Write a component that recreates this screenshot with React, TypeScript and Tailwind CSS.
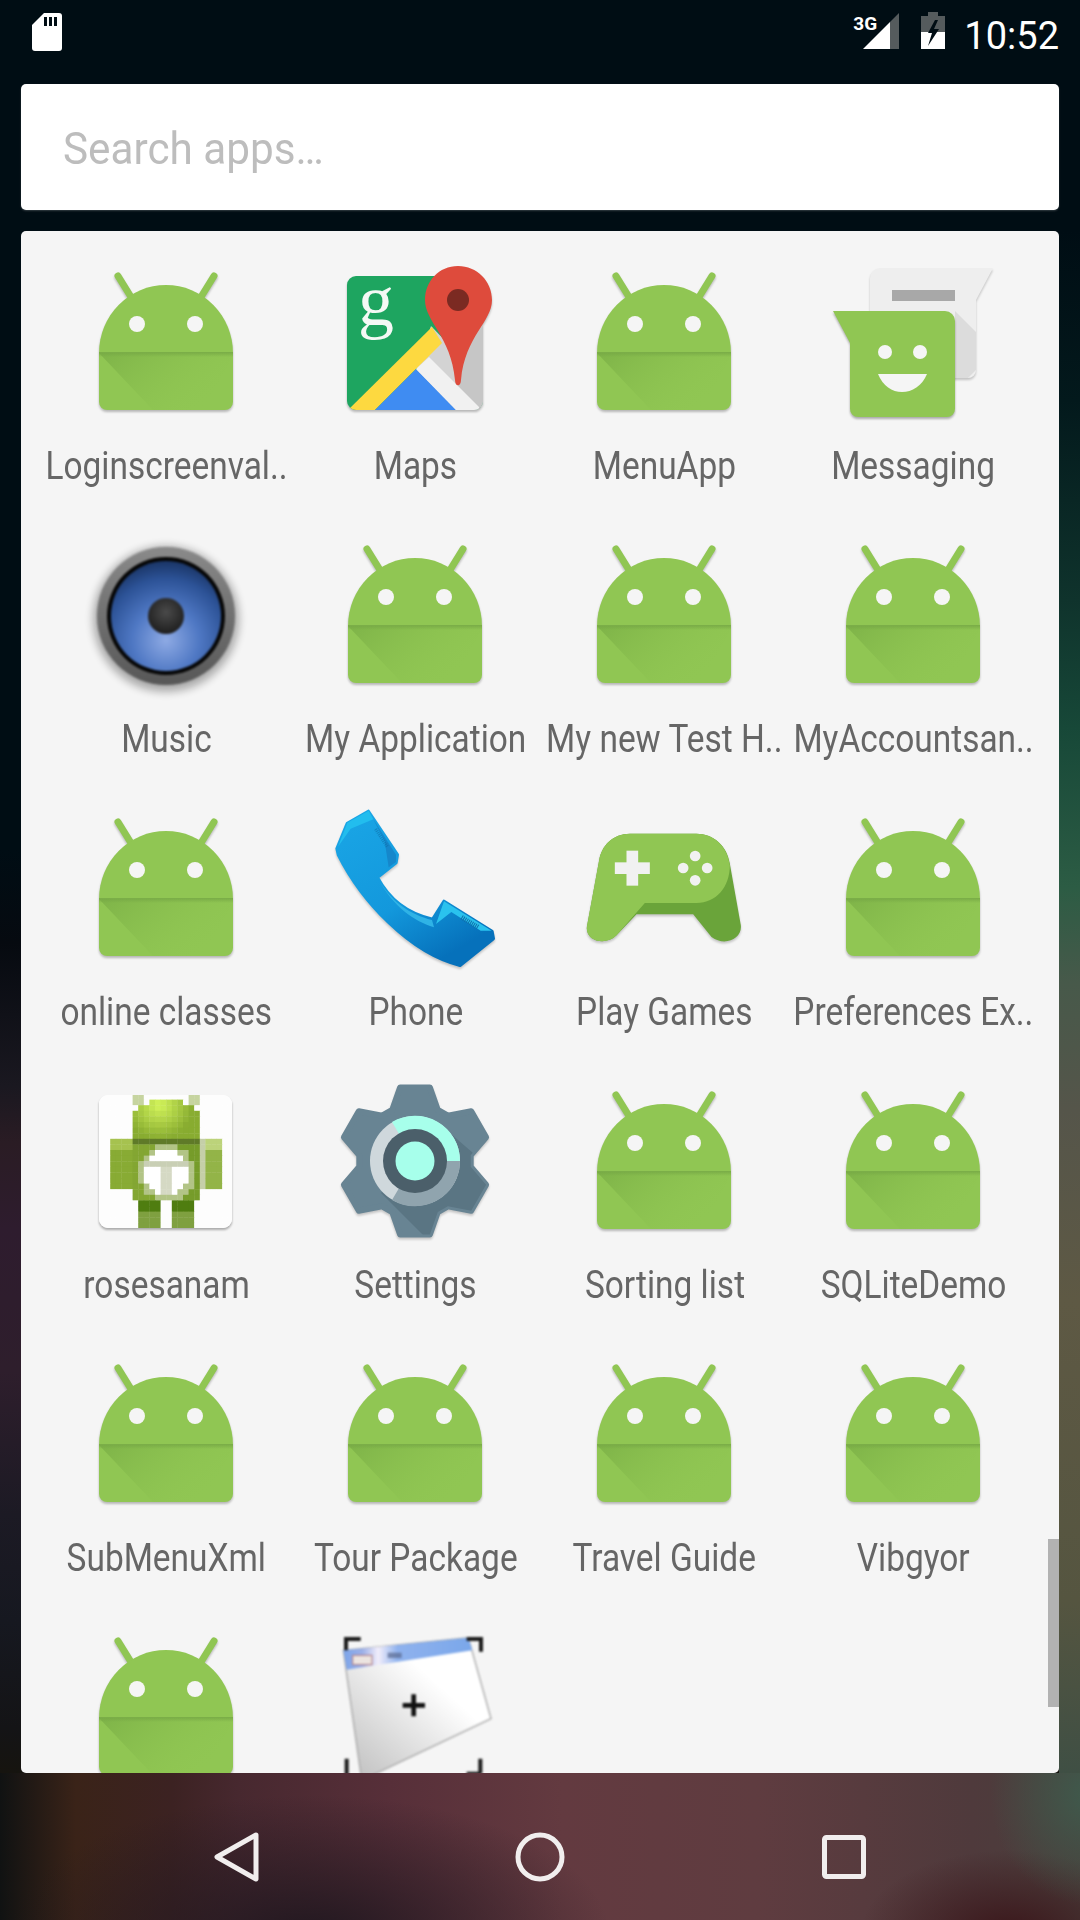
import React from "react";

const Android = () => (
  <svg width="144" height="144" viewBox="0 0 144 144" className="overflow-visible drop-shadow-[0_2px_1px_rgba(0,0,0,0.25)]">
    <defs>
      <linearGradient id="fold" x1="0" y1="0" x2="1" y2="0.5">
        <stop offset="0" stopColor="#6fa33f" stopOpacity="0.55" />
        <stop offset="1" stopColor="#8fc650" stopOpacity="0" />
      </linearGradient>
      <linearGradient id="crease" x1="0" y1="0" x2="0" y2="1">
        <stop offset="0" stopColor="#76a845" stopOpacity="0.9" />
        <stop offset="1" stopColor="#76a845" stopOpacity="0" />
      </linearGradient>
    </defs>
    <path d="M24 6 L37 27 M120 6 L107 27" stroke="#90c653" strokeWidth="7" strokeLinecap="round" />
    <path d="M5 83 A67 68 0 0 1 139 83 L139 132 A8 8 0 0 1 131 140 L13 140 A8 8 0 0 1 5 132 Z" fill="#90c653" />
    <path d="M5 83 L139 83 L139 86 L110 140 L59 140 Z" fill="url(#fold)" />
    <rect x="5" y="82" width="134" height="5" fill="url(#crease)" />
    <circle cx="43" cy="54" r="8" fill="#f5f5f5" />
    <circle cx="101" cy="54" r="8" fill="#f5f5f5" />
  </svg>
);

const Maps = () => (
  <svg width="144" height="144" viewBox="0 0 144 144" className="overflow-visible drop-shadow-[0_2px_1px_rgba(0,0,0,0.25)]">
    <defs>
      <clipPath id="mapclip"><rect x="4" y="6" width="136" height="134" rx="9" /></clipPath>
    </defs>
    <g clipPath="url(#mapclip)">
      <rect x="4" y="6" width="136" height="134" fill="#1ea560" />
      <polygon points="88,56 140,110 140,140 60,140" fill="#d3d3d3" />
      <polygon points="115,30 140,30 140,140 115,140" fill="#c6c6c6" />
      <polygon points="4,141 89,57 99,73 32,140" fill="#fdd940" />
      <polygon points="32,140 73,99 113,140" fill="#3f8cf2" />
      <polygon points="73,99 86,87 136,137 136,140 113,140" fill="#f1f1f1" />
    </g>
    <text x="33" y="55" textAnchor="middle" fontFamily="'Liberation Serif', serif" fontSize="72" fill="#f4f9f5">g</text>
    <path d="M115 -4 C96 -4 82 11 82 30 C82 52 108 66 112 110 C112 117 118 117 118 110 C122 66 149 52 149 30 C149 11 134 -4 115 -4 Z" fill="#de4b3c" />
    <circle cx="115" cy="30" r="11" fill="#7b2a22" />
  </svg>
);

const Messaging = () => (
  <svg width="144" height="144" viewBox="1 0 144 144" className="overflow-visible">
    <path d="M40 -2 L153 -2 L136 30 L136 100 A8 8 0 0 1 128 108 L38 108 A8 8 0 0 1 30 100 L30 8 A10 10 0 0 1 40 -2 Z" fill="#eeeeee" className="drop-shadow-[0_2px_1px_rgba(0,0,0,0.2)]" />
    <polygon points="115,41 136,62 136,100 128,108 115,108" fill="#dcdcdc" />
    <rect x="52" y="20" width="63" height="11" fill="#a8a8a8" />
    <path d="M-7 41 L105 41 A10 10 0 0 1 115 51 L115 139 A8 8 0 0 1 107 147 L18 147 A8 8 0 0 1 10 139 L10 73 Z" fill="#90c653" className="drop-shadow-[0_2px_1px_rgba(0,0,0,0.3)]" />
    <circle cx="45" cy="82" r="7" fill="#f5f5f5" />
    <circle cx="80" cy="82" r="7" fill="#f5f5f5" />
    <path d="M38 104 L87 104 C82 116 72 122 62 122 C52 122 43 116 38 104 Z" fill="#f5f5f5" />
  </svg>
);

const Music = () => (
  <svg width="144" height="144" viewBox="0 0 144 144" className="overflow-visible">
    <defs>
      <radialGradient id="cone" cx="0.5" cy="0.72" r="0.72">
        <stop offset="0" stopColor="#8eaae4" />
        <stop offset="0.42" stopColor="#4f78c4" />
        <stop offset="0.78" stopColor="#2c5296" />
        <stop offset="1" stopColor="#1a3566" />
      </radialGradient>
      <radialGradient id="capm" cx="0.5" cy="0.4" r="0.6">
        <stop offset="0" stopColor="#4a4a4a" />
        <stop offset="1" stopColor="#1e1e1e" />
      </radialGradient>
      <linearGradient id="rim" x1="0" y1="0" x2="0" y2="1">
        <stop offset="0" stopColor="#8a8a8a" />
        <stop offset="1" stopColor="#575757" />
      </linearGradient>
    </defs>
    <circle cx="72" cy="76" r="73" fill="#000" opacity="0.3" className="blur-[4px]" />
    <g className="blur-[1px]">
      <circle cx="72" cy="73" r="69" fill="url(#rim)" />
      <circle cx="72" cy="73" r="59" fill="#060606" />
      <circle cx="72" cy="73" r="55" fill="url(#cone)" />
      <circle cx="72" cy="73" r="18" fill="url(#capm)" />
    </g>
  </svg>
);

const Phone = () => (
  <svg width="160" height="160" viewBox="75 50 480 480" className="overflow-visible drop-shadow-[0_2px_1px_rgba(0,0,0,0.2)]">
    <defs>
      <linearGradient id="ph" x1="0" y1="0" x2="0.6" y2="1">
        <stop offset="0" stopColor="#1aa6e6" />
        <stop offset="0.62" stopColor="#1398dc" />
        <stop offset="1" stopColor="#0671bb" />
      </linearGradient>
    </defs>
    <path d="M175 60 L262 190 L258 214 L202 258 C240 330 295 368 368 384 L402 330 L546 420 L550 442 L450 522 C300 485 155 330 85 190 L81 172 L112 96 Z" fill="url(#ph)" stroke="url(#ph)" strokeWidth="10" strokeLinejoin="round" />
    <path d="M176 58 L112 94 L84 166 L122 112 L190 84 Z" fill="#22bdee" />
    <path d="M190 84 L258 190 L258 212 L236 228 L224 150 Z" fill="#1587cb" />
    <path d="M402 330 L545 418 L512 418 L424 362 L378 398 Z" fill="#2ac2ee" />
    <path d="M208 268 C248 335 300 368 366 386 L372 408 C310 388 250 345 208 268 Z" fill="#2fb3e6" />
    <path d="M455 378 L505 408" stroke="#0f6fa8" strokeWidth="14" strokeDasharray="3 3" fill="none" />
    <path d="M197 113 L232 166" stroke="#0f6fa8" strokeWidth="10" strokeDasharray="3 3" fill="none" opacity="0.6" />
  </svg>
);

const Games = () => (
  <svg width="156" height="110" viewBox="830 128 465 330" className="overflow-visible drop-shadow-[0_2px_1px_rgba(0,0,0,0.2)]">
    <path d="M960 130 L1160 130 C1210 130 1252 165 1260 220 L1293 405 C1298 445 1245 470 1205 440 L1150 372 L980 372 L920 435 C885 470 822 450 832 405 L868 210 C875 165 910 130 960 130 Z" fill="#6aa43a" />
    <path d="M960 130 L1160 130 C1210 130 1252 165 1260 225 C1260 290 1220 338 1160 338 L1005 338 L920 435 C885 470 822 450 832 405 L868 210 C875 165 910 130 960 130 Z" fill="#90c653" />
    <rect x="915" y="216" width="105" height="35" fill="#f1f1f1" />
    <rect x="950" y="181" width="35" height="105" fill="#f1f1f1" />
    <circle cx="1156" cy="197" r="16" fill="#f1f1f1" />
    <circle cx="1120" cy="233" r="16" fill="#f1f1f1" />
    <circle cx="1192" cy="233" r="16" fill="#f1f1f1" />
    <circle cx="1156" cy="270" r="16" fill="#f1f1f1" />
  </svg>
);

const rosePixel = (x: number, y: number): string => {
  const mix = (t: number) => {
    const k = Math.max(0, Math.min(1, t));
    const a = [212, 245, 92];
    const b = [136, 172, 48];
    return `rgb(${a.map((v, i) => Math.round(v + (b[i] - v) * k)).join(",")})`;
  };
  const inBody = x >= 39 && x <= 104;
  if (inBody && y >= 12 && y < 48) {
    const w = Math.min(33, 16 + (y - 12) * 1.4);
    if (Math.abs(x - 72) <= w) return mix(Math.hypot(x - 65, y - 16) / 34);
  }
  if (inBody && y >= 48 && y < 54) return "#5f7a28";
  if (inBody && y >= 54 && y < 113) {
    const d = Math.hypot(x - 73, y - 84);
    if (d < 23) {
      if (y >= 72 && y < 78) return "#c9cfb5";
      if (Math.abs(x - 73) < 4 && y >= 78) return "#d5d9c4";
      return "#ffffff";
    }
    if (d < 28) return "#b2c486";
    return x < 70 ? "#83a632" : "#769c2a";
  }
  if (x >= 18 && x <= 36 && y >= 48 && y <= 101) return y < 60 ? "#a6c24f" : "#88ab34";
  if (x >= 109 && x <= 128 && y >= 48 && y <= 101) return y < 60 ? "#bcd37a" : "#93b448";
  if (x > 36 && x < 39 && y >= 48 && y <= 101) return "#e2e8cf";
  if (x > 104 && x < 109 && y >= 48 && y <= 101) return "#c5cfa8";
  if (y >= 113 && y <= 140) {
    if (x >= 45 && x <= 66) return y < 125 ? "#4f7d10" : "#7fa040";
    if (x >= 79 && x <= 100) return y < 125 ? "#4f7d10" : "#7fa040";
  }
  if (y >= 4 && y < 14 && (Math.abs(x - 46) < 6 || Math.abs(x - 98) < 6)) return "#c6d4a0";
  return "#fdfdfd";
};

const Rose = () => {
  const s = 5.6;
  const cells: React.ReactNode[] = [];
  for (let gy = 0; gy < 24; gy++) {
    for (let gx = 0; gx < 24; gx++) {
      const x = 5 + gx * s;
      const y = 5 + gy * s;
      cells.push(<rect key={`${gx}-${gy}`} x={x} y={y} width={s + 0.4} height={s + 0.4} fill={rosePixel(x + s / 2, y + s / 2)} />);
    }
  }
  return (
    <svg width="144" height="144" viewBox="0 0 144 144" className="overflow-visible drop-shadow-[0_2px_1px_rgba(0,0,0,0.3)]">
      <defs>
        <clipPath id="roseclip"><rect x="5" y="6" width="133" height="133" rx="9" /></clipPath>
      </defs>
      <rect x="5" y="6" width="133" height="133" rx="9" fill="#fdfdfd" />
      <g clipPath="url(#roseclip)">
        <g className="blur-[0.7px]">{cells}</g>
      </g>
    </svg>
  );
};

const gearPath = () => {
  const pts: string[] = [];
  for (let i = 0; i < 6; i++) {
    const a = (-90 + i * 60) * (Math.PI / 180);
    const p = (rad: number, off: number) => {
      const x = rad * Math.cos(a + off);
      const y = rad * Math.sin(a + off);
      return `${(72 + x).toFixed(1)} ${(72 + y).toFixed(1)}`;
    };
    pts.push(p(56, -0.42), p(75, -0.2), p(75, 0.2), p(56, 0.42));
  }
  return "M" + pts.join(" L") + " Z";
};

const Settings = () => (
  <svg width="144" height="144" viewBox="0 0 144 144" className="overflow-visible drop-shadow-[0_2px_1px_rgba(0,0,0,0.2)]">
    <defs>
      <clipPath id="gearclip"><path d={gearPath()} /></clipPath>
    </defs>
    <path d={gearPath()} fill="#688493" stroke="#688493" strokeWidth="6" strokeLinejoin="round" />
    <g clipPath="url(#gearclip)">
      <polygon points="100,38 160,90 160,160 84,150 38,104" fill="#5a7583" />
    </g>
    <circle cx="72" cy="72" r="45" fill="#cfd8dc" />
    <path d="M72 72 L117 72 A45 45 0 0 1 49 111 Z" fill="#90a4ae" />
    <path d="M72 72 L49 33 A45 45 0 0 1 117 72 Z" fill="#a7ffeb" />
    <circle cx="72" cy="72" r="32" fill="#4b5f6a" />
    <circle cx="72" cy="72" r="19.5" fill="#a7ffeb" />
  </svg>
);

const Shot = () => (
  <svg width="160" height="150" viewBox="800 45 480 450" className="overflow-visible blur-[1px]">
    <defs>
      <linearGradient id="sh" x1="0.05" y1="0.9" x2="0.8" y2="0.1">
        <stop offset="0" stopColor="#c4c4c4" />
        <stop offset="0.75" stopColor="#ffffff" />
      </linearGradient>
      <linearGradient id="tb" x1="0" y1="0" x2="1" y2="0">
        <stop offset="0" stopColor="#7aa4ea" />
        <stop offset="0.15" stopColor="#9db0e8" />
        <stop offset="0.27" stopColor="#f2eefb" />
        <stop offset="0.42" stopColor="#8fb2ee" />
        <stop offset="1" stopColor="#7aa7ea" />
      </linearGradient>
    </defs>
    <polygon points="825,100 1200,62 1268,305 880,490" fill="url(#sh)" stroke="#a8a8a8" strokeWidth="4" />
    <polygon points="825,100 1200,62 1212,100 835,158" fill="url(#tb)" />
    <rect x="853" y="115" width="58" height="28" fill="#ece4e0" stroke="#b07a80" strokeWidth="3" />
    <rect x="958" y="107" width="42" height="16" fill="#5a6a90" opacity="0.7" />
    <path d="M877 66 L833 66 L833 100 M1195 66 L1238 66 L1238 104 M835 425 L835 480 M1236 425 L1236 470 M1195 470 L1236 470" stroke="#1a1a1a" strokeWidth="12" fill="none" />
    <path d="M1003 265 L1070 265 M1036 232 L1036 298" stroke="#111" strokeWidth="14" />
  </svg>
);

const apps: { name: string; icon: React.ReactNode }[] = [
  { name: "Loginscreenval..", icon: <Android /> },
  { name: "Maps", icon: <Maps /> },
  { name: "MenuApp", icon: <Android /> },
  { name: "Messaging", icon: <Messaging /> },
  { name: "Music", icon: <Music /> },
  { name: "My Application", icon: <Android /> },
  { name: "My new Test H..", icon: <Android /> },
  { name: "MyAccountsan..", icon: <Android /> },
  { name: "online classes", icon: <Android /> },
  { name: "Phone", icon: <Phone /> },
  { name: "Play Games", icon: <Games /> },
  { name: "Preferences Ex..", icon: <Android /> },
  { name: "rosesanam", icon: <Rose /> },
  { name: "Settings", icon: <Settings /> },
  { name: "Sorting list", icon: <Android /> },
  { name: "SQLiteDemo", icon: <Android /> },
  { name: "SubMenuXml", icon: <Android /> },
  { name: "Tour Package", icon: <Android /> },
  { name: "Travel Guide", icon: <Android /> },
  { name: "Vibgyor", icon: <Android /> },
  { name: "", icon: <Android /> },
  { name: "", icon: <Shot /> },
];

export default function App() {
  return (
    <div className="relative flex h-[1920px] w-[1080px] flex-col overflow-hidden bg-[radial-gradient(ellipse_100px_110px_at_1090px_1795px,#3f5a4c_0%,transparent_100%),radial-gradient(ellipse_150px_85px_at_1010px_1935px,#3a161a_0%,transparent_100%),radial-gradient(ellipse_300px_140px_at_310px_1935px,#221820_0%,transparent_100%),linear-gradient(90deg,#101212_0%,#3a2318_7%,#3c2222_16%,#47282f_22%,#572f39_36%,#633a40_52%,#5f3c40_70%,#4f3a3c_90%,#4a3f3c_100%)] font-['Roboto',sans-serif]">
      <div className="absolute inset-x-0 top-0 h-[1773px] bg-[linear-gradient(180deg,#000d14_0px,#000d14_850px,#060a10_943px,#1a1820_1086px,#2a1c24_1143px,#2e1c2e_1228px,#2e1e2c_1371px,#1c1a24_1514px,#161820_1621px,#141416_1728px,#16140f_1773px)]" />
      <div className="absolute right-0 top-0 h-[1773px] w-[21px] bg-[linear-gradient(180deg,#000d14_0px,#000d14_230px,#03191c_400px,#0f332c_600px,#174838_728px,#2c5c44_887px,#47594a_983px,#55554a_1110px,#5e5944_1300px,#555540_1600px,#3f4f44_1773px)]" />

      <div className="relative flex h-[84px] shrink-0 items-start justify-between pl-[32px] pr-[21px] pt-[12px]">
        <svg width="30" height="38" viewBox="0 0 30 38" className="mt-[1px]">
          <path d="M12 0 L27 0 A3 3 0 0 1 30 3 L30 35 A3 3 0 0 1 27 38 L3 38 A3 3 0 0 1 0 35 L0 12 Z" fill="#fff" />
          <rect x="12" y="4" width="3" height="9" fill="#000d14" />
          <rect x="17" y="4" width="3" height="9" fill="#000d14" />
          <rect x="22" y="4" width="3" height="9" fill="#000d14" />
        </svg>
        <div className="relative flex items-start">
          <div className="relative h-[40px] w-[48px]">
            <svg width="36" height="37" viewBox="0 0 36 37" className="absolute left-[11px] top-[1px]">
              <polygon points="36,0 36,36 27,36 27,9" fill="#555b5d" />
              <polygon points="27,9 27,36 0,36" fill="#fff" />
            </svg>
            <span className="absolute left-[1px] top-[2px] text-[19px] font-bold leading-[19px] text-white">3G</span>
          </div>
          <svg width="26" height="38" viewBox="0 0 26 38" className="ml-[20px]">
            <path d="M8 0 H18 V4 H25 V20 H1 V4 H8 Z" fill="#555b5d" />
            <rect x="1" y="20" width="24" height="17" fill="#fff" />
            <path d="M15 8 L8 21 L12 21 L8 34 L19 17 L14 17 L18 8 Z" fill="#000d14" />
          </svg>
          <span className="ml-[18px] mt-[2px] text-[38px] leading-[44px] text-white">10:52</span>
        </div>
      </div>

      <div className="relative mx-[21px] flex h-[126px] shrink-0 items-center rounded-[5px] bg-white pl-[42px] pt-[3px] shadow-[0_1px_2px_rgba(255,255,255,0.2)]">
        <span className="origin-left scale-x-[0.96] text-[44px] leading-none text-[#bdbdbd]">Search apps…</span>
      </div>

      <div className="relative mx-[21px] mt-[21px] h-[1542px] shrink-0 overflow-hidden rounded-[5px] bg-[#f5f5f5] px-[21px] pt-[39px]">
        <div className="grid grid-cols-4 auto-rows-[273px]">
          {apps.map((a, i) => (
            <div key={i} className="flex flex-col items-center">
              <div className="flex h-[144px] w-[144px] -translate-x-[1px] items-center justify-center">{a.icon}</div>
              <div className="mt-[29px] flex w-full justify-center whitespace-nowrap text-[38px] leading-[46px] text-[#666666]">
                <span className="shrink-0 origin-center scale-x-[0.88]">{a.name}</span>
              </div>
            </div>
          ))}
        </div>
        <div className="absolute right-0 top-[1308px] h-[168px] w-[11px] bg-[#b2b2b2]" />
      </div>

      <div className="relative h-[147px] shrink-0">
        <svg width="50" height="52" viewBox="0 0 50 52" className="absolute left-[212px] top-[58px]">
          <path d="M44 4 L5 26 L44 48 Z" fill="none" stroke="#f1eeee" strokeWidth="5" strokeLinejoin="round" />
        </svg>
        <svg width="52" height="52" viewBox="0 0 52 52" className="absolute left-[514px] top-[58px]">
          <circle cx="26" cy="26" r="22" fill="none" stroke="#f1eeee" strokeWidth="5" />
        </svg>
        <svg width="46" height="46" viewBox="0 0 46 46" className="absolute left-[821px] top-[61px]">
          <rect x="3.5" y="3.5" width="39" height="39" rx="2" fill="none" stroke="#f1eeee" strokeWidth="5" />
        </svg>
      </div>
    </div>
  );
}
